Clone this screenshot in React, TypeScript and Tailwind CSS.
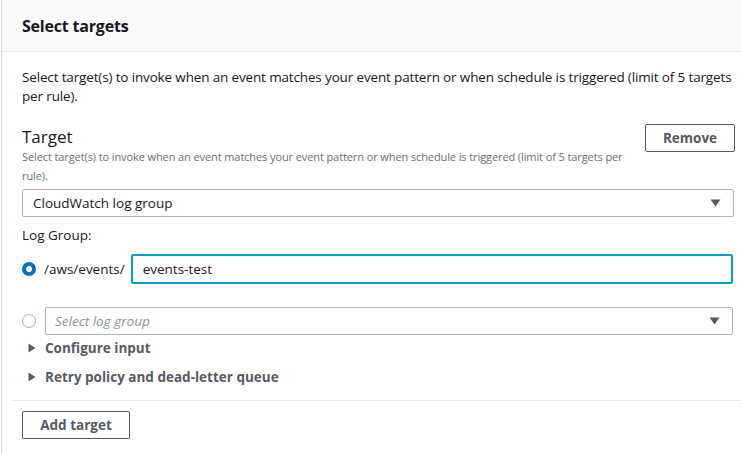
import React from "react";

const Caret = ({ className = "" }: { className?: string }) => (
  <svg width="11" height="8" viewBox="0 0 11 8" className={className}>
    <path d="M0.5 0.5 H10.5 L5.5 7.5 Z" fill="#545b64" />
  </svg>
);

const RightCaret = () => (
  <svg width="8" height="10" viewBox="0 0 8 10">
    <path d="M0.5 0.5 L7.5 5 L0.5 9.5 Z" fill="#545b64" />
  </svg>
);

export default function App() {
  return (
    <div
      className="w-[741px] h-[454px] bg-white text-[#16191f] overflow-hidden"
      style={{ fontFamily: '"Open Sans", "Noto Sans", Arial, sans-serif' }}
    >
      <div className="ml-[1px] border-l border-[#d5dbdb] h-full">
        <div className="h-[52px] bg-[#fafafa] border-b border-[#eaeded] flex items-center pl-[20px]">
          <h2 className="text-[16px] font-bold leading-[20px] tracking-[-0.2px]">Select targets</h2>
        </div>
        <div className="pl-[20px] pr-[8px]">
          <p className="mt-[16px] text-[13.5px] leading-[19px] tracking-[-0.15px]">
            Select target(s) to invoke when an event matches your event pattern or when schedule is triggered (limit of 5 targets per rule).
          </p>
          <div className="mt-[21px] flex items-start justify-between">
            <div className="w-[620px]">
              <div className="text-[17px] leading-[20px]">Target</div>
              <div className="text-[11px] leading-[19px] text-[#687078] tracking-[-0.1px]">
                Select target(s) to invoke when an event matches your event pattern or when schedule is triggered (limit of 5 targets per rule).
              </div>
            </div>
            <button className="mt-[-3px] mr-[-2px] w-[90px] h-[28px] border border-[#545b64] rounded-[2px] text-[13.5px] font-bold text-[#545b64] bg-white">
              Remove
            </button>
          </div>
          <div className="mt-[4px] w-[712px] h-[28px] border border-[#aab7b8] rounded-[2px] flex items-center justify-between pl-[10px] pr-[12px] text-[13.5px]">
            <span>CloudWatch log group</span>
            <Caret />
          </div>
          <div className="mt-[9px] text-[13.5px] leading-[18px]">Log Group:</div>
          <div className="mt-[10px] flex items-center">
            <span className="w-[14px] h-[14px] rounded-full border-[4px] border-[#0073bb] bg-white" />
            <span className="ml-[8px] text-[13.5px]">/aws/events/</span>
            <div className="ml-[6px] w-[603px] h-[30px] border-2 border-[#00a1c9] rounded-[2px] flex items-center pl-[10px] text-[13.5px]">
              events-test
            </div>
          </div>
          <div className="mt-[23px] flex items-center">
            <span className="w-[14px] h-[14px] rounded-full border border-[#aab7b8] bg-white" />
            <div className="ml-[9px] w-[689px] h-[28px] border border-[#aab7b8] rounded-[2px] flex items-center justify-between pl-[9px] pr-[12px] text-[13.5px]">
              <span className="italic text-[#879596]">Select log group</span>
              <Caret />
            </div>
          </div>
          <div className="mt-[3px] flex items-center h-[20px] pl-[6px] gap-[9px] text-[13.5px] font-bold text-[#545b64]">
            <RightCaret />
            <span>Configure input</span>
          </div>
          <div className="mt-[9px] flex items-center h-[20px] pl-[6px] gap-[9px] text-[13.5px] font-bold text-[#545b64]">
            <RightCaret />
            <span>Retry policy and dead-letter queue</span>
          </div>
        </div>
        <div className="mt-[13px] ml-[10px] border-t border-[#eaeded]" />
        <div className="pl-[20px] mt-[10px]">
          <button className="w-[108px] h-[28px] border border-[#545b64] rounded-[2px] text-[13.5px] font-bold text-[#545b64] bg-white">
            Add target
          </button>
        </div>
      </div>
    </div>
  );
}
